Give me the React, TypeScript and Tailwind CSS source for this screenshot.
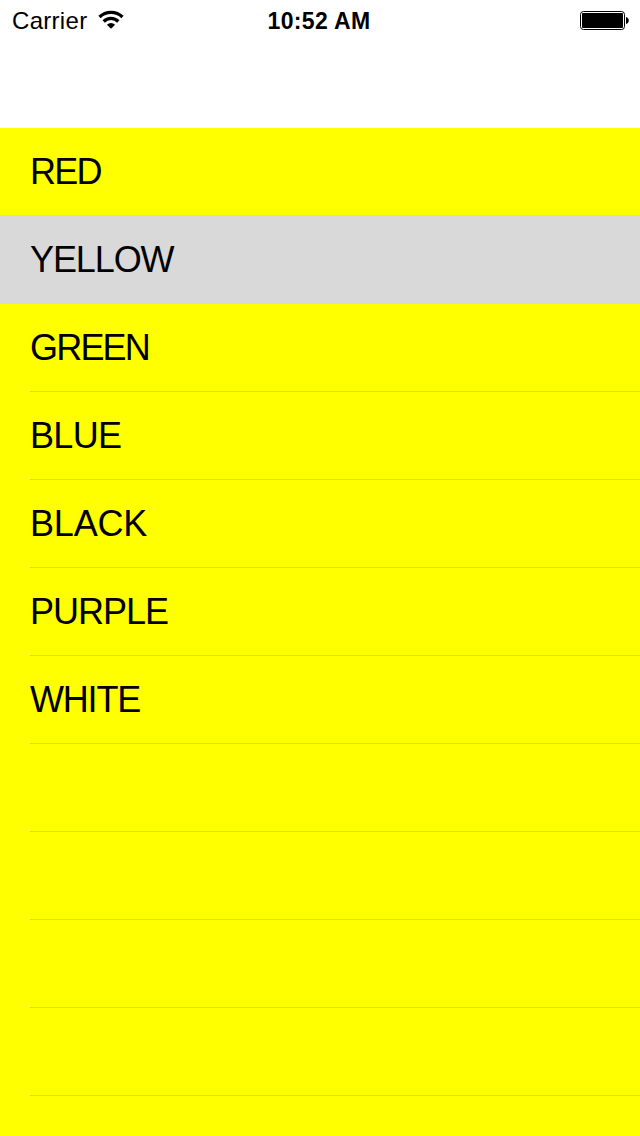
const rows = [
  { name: "RED", tracking: "tracking-[-1.8px]" },
  { name: "YELLOW", tracking: "tracking-[-1.1px]" },
  { name: "GREEN", tracking: "tracking-[-1.8px]" },
  { name: "BLUE", tracking: "tracking-[-0.7px]" },
  { name: "BLACK", tracking: "tracking-[-0.2px]" },
  { name: "PURPLE", tracking: "tracking-[-1px]" },
  { name: "WHITE", tracking: "tracking-[-1.2px]" },
];

const emptyRows = [0, 1, 2, 3, 4];

function StatusBar() {
  return (
    <header className="flex h-10 items-center justify-between pl-3 pr-[11px] text-2xl">
      <div className="flex flex-1 items-center gap-[11px]">
        <span className="relative top-px tracking-[0.3px]">Carrier</span>
        <svg width="26" height="20" viewBox="0 0 26 20" fill="none" stroke="#000" strokeWidth="3.3">
          <path d="M1.5 7a16.5 16.5 0 0 1 23 0" />
          <path d="M5.7 11.5a10.3 10.3 0 0 1 14.6 0" />
          <path d="M13 18.8l-4.1-4.1a6 6 0 0 1 8.2 0z" fill="#000" stroke="none" />
        </svg>
      </div>
      <span className="relative right-[1.5px] top-px text-[23px] font-bold tracking-[0.35px]">10:52 AM</span>
      <div className="flex flex-1 justify-end">
        <svg width="49" height="20" viewBox="0 0 49 20">
          <rect x=".5" y="1.5" width="44" height="18" rx="3" fill="none" stroke="#000" />
          <rect x="2" y="3" width="41" height="15" rx="1" />
          <path d="M46 7a3.6 3.6 0 0 1 0 7z" />
        </svg>
      </div>
    </header>
  );
}

export default function App() {
  return (
    <main className="flex h-[1136px] w-[640px] flex-col overflow-hidden bg-white font-['Liberation_Sans',sans-serif] text-4xl text-black">
      <StatusBar />
      <div className="h-[88px] shrink-0" />
      <ul className="min-h-0 flex-1 overflow-hidden bg-[#ffff00]">
        {rows.map((row, i) =>
          i === 1 ? (
            <li key={row.name} className="-mt-px flex h-[89px] items-center bg-[#d9d9d9] pl-[30px] pt-px">
              <span className={row.tracking}>{row.name}</span>
            </li>
          ) : (
            <li key={row.name} className="h-[88px] pl-[30px]">
              <div className={i === 0 ? "flex h-full items-center" : "flex h-full items-center border-b border-[#c8c7cc]"}>
                <span className={row.tracking}>{row.name}</span>
              </div>
            </li>
          ),
        )}
        {emptyRows.map((i) => (
          <li key={i} className="h-[88px] pl-[30px]">
            <div className="h-full border-b border-[#c8c7cc]" />
          </li>
        ))}
      </ul>
    </main>
  );
}
